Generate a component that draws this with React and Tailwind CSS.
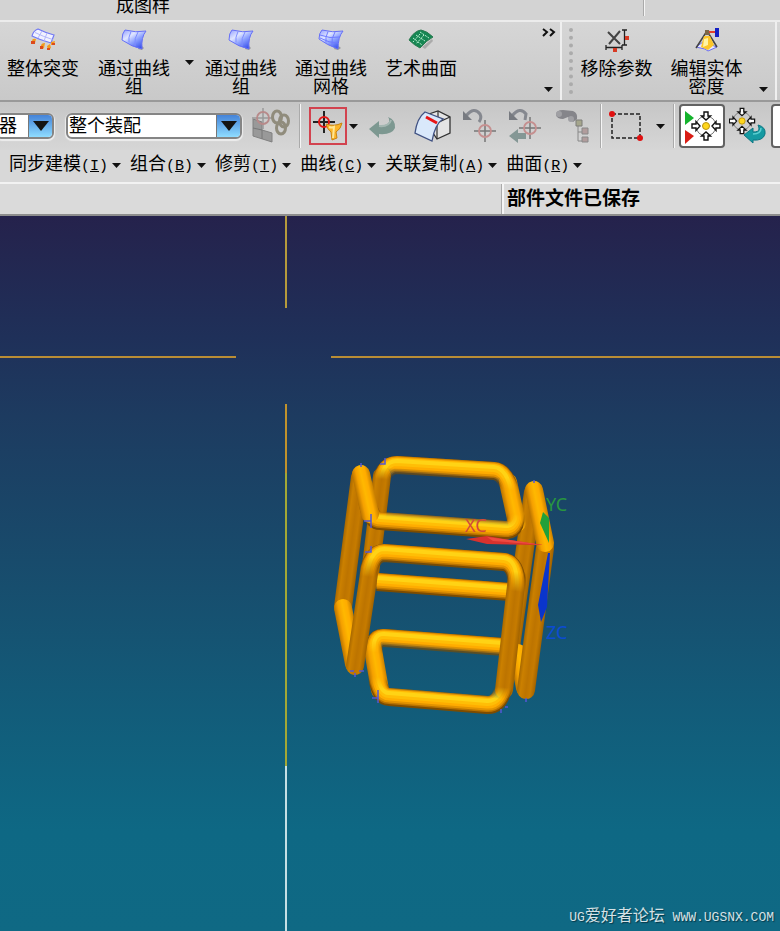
import React from 'react';

const Caret = ({ className = '' }) => (
  <svg viewBox="0 0 9 5" className={`w-[9px] h-[5px] shrink-0 ${className}`} aria-hidden="true">
    <path d="M0 0h9L4.5 5z" fill="#111" />
  </svg>
);

// --- TOOLBAR ICONS ---

const MorphIcon = () => (
  <svg viewBox="0 0 26 24" className="w-[26px] h-6">
    <path d="M8 1q8 4 16 6l-3 8Q10 12 2 8 3 3 8 1z" fill="#f1f2ff" stroke="#7078f4" strokeWidth="1.2" />
    <path d="M5 4.500q8 4 17.500 7M12 3l-4 7M17 5l-3 8" fill="none" stroke="#b3b7fb" strokeWidth="1" />
    <path d="M2 13q0-3 4-2l-1 4q-3 1-3-2zM11 18q0-3 4-3l-1 5q-2 2-3-2zM17 18l3-2 1 4-3 2zM21 14l4-1-1 4-3 0z" fill="#f29a1c" />
    <path d="M1 13h4v3H1zM10 18h3v3h-3zM17 20h3v2h-3zM22 15h3v2h-3z" fill="#dc4a1c" />
  </svg>
);

const CurvesIcon = () => (
  <svg viewBox="0 0 26 24" className="w-[26px] h-6">
    <defs>
      <linearGradient id="curves" x1="0" y1="0" x2="0.8" y2="1">
        <stop offset="0" stopColor="#8f9cff" />
        <stop offset="0.35" stopColor="#e0e6ff" />
        <stop offset="0.6" stopColor="#8fa3ff" />
        <stop offset="1" stopColor="#2f49ea" />
      </linearGradient>
    </defs>
    <path d="M19 16l4 4-2 2-4-1z" fill="#999" />
    <path d="M4 2q11 3 21 1-5 6-4 18Q11 19 1 12 1 5 4 2z" fill="url(#curves)" stroke="#6670f6" strokeWidth="1" />
    <path d="M10 3.500q-3 6-2 11M17 4q-4 6-3 14" fill="none" stroke="#7c8cff" strokeWidth="1" />
  </svg>
);

const MeshIcon = () => (
  <svg viewBox="0 0 26 24" className="w-[26px] h-6">
    <path d="M18 16l5 4-3 2-4-1z" fill="#999" />
    <path d="M4 2q11 3 21 1-5 6-5 18Q9 17 1 11 1 5 4 2z" fill="url(#curves)" stroke="#6670f6" strokeWidth="1" />
    <path d="M10 3.500q-3 6-2 11M17 4q-4 6-3 14M2 7q10 4 20 2M2 10q9 5 18 5" fill="none" stroke="#6f7cff" strokeWidth="1" />
  </svg>
);

const ArtSurfaceIcon = () => (
  <svg viewBox="0 0 26 24" className="w-[26px] h-6">
    <path d="M14 19l10-8 1 2-8 8z" fill="#aaa" />
    <path d="M1 12Q6 3 13 2q6 1 12 7-6 3-13 11Q6 17 1 12z" fill="#168653" stroke="#2b7a4f" strokeWidth="1" />
    <path d="M5 10l9 7M8 7l9 6M12 4l9 6M12 6l-7 8M16 7l-8 9" fill="none" stroke="#b9efcf" strokeWidth="1" strokeDasharray="2 1" />
  </svg>
);

const RemoveParamsIcon = () => (
  <svg viewBox="0 0 26 24" className="w-[26px] h-6">
    <path d="M4 4l12 12M16 3L5 16" stroke="#444" strokeWidth="2" />
    <path d="M18 2h5M18 17h5M20.500 2v15M2 17v5M18 17v5M2 19.500h16" stroke="#222" strokeWidth="1.300" fill="none" />
    <path d="M21 8h4v4h-4zM9 20h4v4H9z" fill="#d83a24" />
  </svg>
);

const DensityIcon = () => (
  <svg viewBox="0 0 26 24" className="w-[26px] h-6">
    <path d="M2 19l7-5 14 5-9 4-3-2z" fill="#e9eaff" stroke="#6a6cf0" strokeWidth="1" />
    <path d="M13 3L2 20M13 3l10 16" stroke="#444" strokeWidth="1.500" />
    <path d="M10 8h6l4 9-6 5-7-3z" fill="#fcc62a" />
    <path d="M10 11l4-1v7l-5 2z" fill="#fff4a5" />
    <path d="M11 2h4l1 5h-5z" fill="#7c6746" />
    <path d="M15 3h7v2h-7z" fill="#e3402c" />
    <path d="M21 0h4v9h-4z" fill="#1420c4" />
  </svg>
);

const Crosshair = ({ cx, cy, stroke = '#777', ring = '#c58f8f' }) => (
  <g fill="none">
    <path d={`M${cx - 11} ${cy}h22M${cx} ${cy - 11}v22`} stroke={stroke} strokeWidth="1.500" />
    <circle cx={cx} cy={cy} r="6" stroke={ring} strokeWidth="1.800" />
  </g>
);

const AssemblyLinkIcon = () => (
  <svg viewBox="0 0 38 36" className="w-[38px] h-9">
    <path d="M1 11l9 3v8l10 3v9L1 28z" fill="#999" stroke="#808080" />
    <path d="M1 20l9 2v9" fill="none" stroke="#777" />
    <Crosshair cx={11} cy={10} stroke="#999" ring="#b78a8a" />
    <g fill="none" strokeWidth="3" stroke="#908c7c">
      <ellipse cx="25" cy="9" rx="4.500" ry="6" />
      <ellipse cx="32" cy="13" rx="4.500" ry="6" />
      <ellipse cx="29" cy="20" rx="4.500" ry="6" />
    </g>
  </svg>
);

const FilterIcon = () => (
  <svg viewBox="0 0 34 34" className="w-[34px] h-[34px]">
    <path d="M2 13h22M13 2v22" stroke="#222" strokeWidth="2" />
    <circle cx="13" cy="13" r="5" fill="none" stroke="#e31414" strokeWidth="2" />
    <path d="M15 15q8 3 16-1-1 6-6 9l1 6-5 2-1-8q-4-3-5-8z" fill="#fbb52a" stroke="#c98410" strokeWidth="1" />
    <path d="M18 18q3 1 5 0l-1 11" fill="none" stroke="#ffe694" strokeWidth="2" />
  </svg>
);

const ReturnIcon = () => (
  <svg viewBox="0 0 28 28" className="w-7 h-7">
    <path d="M1 17l10-8v4q8 1 10-3 1-3-1-5 8 3 7 11-3 7-16 6v4z" fill="#7d9891" />
    <path d="M11 14q10 1 12-6" fill="none" stroke="#a4b7b2" strokeWidth="2" />
  </svg>
);

const SketchBoxIcon = () => (
  <svg viewBox="0 0 38 34" className="w-[38px] h-[34px]">
    <path d="M12 6l12-4 12 6v16l-13 6-4-6z" fill="#e4e4e4" stroke="#333" strokeWidth="1.300" />
    <path d="M36 8l-13 6v16M24 2v8" fill="none" stroke="#333" strokeWidth="1.200" />
    <path d="M11 3l18 7q-8 5-11 22L1 24Q3 9 11 3z" fill="#d9e8fb" stroke="#415283" strokeWidth="1.300" />
    <path d="M12 8l11 6" stroke="#e81414" strokeWidth="3" />
  </svg>
);

const UndoPointIcon = () => (
  <svg viewBox="0 0 36 36" className="w-9 h-9">
    <path d="M4 8Q12-2 18 6q2 4-1 8" fill="none" stroke="#85888f" strokeWidth="3" />
    <path d="M1 3v9h9z" fill="#777a80" />
    <Crosshair cx={23} cy={23} />
  </svg>
);

const BackPointIcon = () => (
  <svg viewBox="0 0 36 36" className="w-9 h-9">
    <path d="M4 8Q12-2 18 6l-1 6" fill="none" stroke="#85888f" strokeWidth="3" />
    <path d="M1 3v9h9z" fill="#777a80" />
    <path d="M1 28l9-7v4h8v6h-8v4z" fill="#849795" />
    <Crosshair cx={22} cy={20} />
  </svg>
);

const FindTreeIcon = () => (
  <svg viewBox="0 0 38 36" className="w-[38px] h-9">
    <path d="M2 7q0-5 7-5l10 1q5 2 4 8l-4 3-5-5-5 2q-6 0-7-4z" fill="#85858a" />
    <circle cx="5" cy="6" r="3" fill="#a0a0a4" />
    <circle cx="17" cy="11" r="3" fill="#a0a0a4" />
    <path d="M24 18v15h4M24 24h4" fill="none" stroke="#888" />
    <path d="M22 12h6v6h-6z" fill="#a5a68c" stroke="#7d7d78" />
    <path d="M28 20h6v6h-6zM28 29h6v5h-6z" fill="#b19c9c" stroke="#888" />
  </svg>
);

const RectSelectIcon = () => (
  <svg viewBox="0 0 36 32" className="w-9 h-8">
    <rect x="4" y="4" width="28" height="24" fill="none" stroke="#222" strokeWidth="1.500" strokeDasharray="4 2" />
    <circle cx="4" cy="4" r="3" fill="#e01010" />
    <circle cx="32" cy="28" r="3" fill="#e01010" />
  </svg>
);

const SnapMark = () => (
  <g>
    <circle r="10" fill="none" stroke="#777" strokeWidth="1" />
    <g fill="#fff" stroke="#111" strokeWidth="1.400">
      <path d="M-2-14h4v4h2.500L0-6l-4.500-4H-2z" />
      <path d="M-2 14h4v-4h2.500L0 6l-4.500 4H-2z" />
      <path d="M-14-2v4h4v2.500L-6 0l-4-4.500V-2z" />
      <path d="M14-2v4h-4v2.500L6 0l4-4.500V-2z" />
    </g>
    <circle r="3.500" fill="#ffd61c" stroke="#bb930e" strokeWidth="1" />
  </g>
);

const SnapEnableIcon = () => (
  <svg viewBox="0 0 42 40" className="w-[42px] h-10">
    <path d="M4 5l9 7-9 7z" fill="#15b32d" />
    <path d="M4 24l9 6-9 8z" fill="#d91c14" />
    <g transform="translate(25 20)"><SnapMark /></g>
  </svg>
);

const SnapResetIcon = () => (
  <svg viewBox="0 0 38 38" className="w-[38px] h-[38px]">
    <g transform="translate(13 14) scale(.9)"><SnapMark /></g>
    <path d="M15 28l9-7v4q6 0 6-3 0-2-1-4 8 2 7 9-2 7-12 6v3z" fill="#159aa2" stroke="#0d7783" strokeWidth="1" />
    <path d="M24 27q8 0 8-6" fill="none" stroke="#5cd0d2" strokeWidth="1.500" />
  </svg>
);

// --- TOOLBAR PIECES ---

const ToolButton = ({ icon, label }) => (
  <button type="button" className="flex w-[72px] shrink-0 flex-col items-center gap-2 text-center text-lg leading-[18px]">
    {icon}
    <span className="w-[72px] break-all">{label}</span>
  </button>
);

const IconButton = ({ label, className = '', children }) => (
  <button type="button" aria-label={label} className={`flex shrink-0 items-center justify-center ${className}`}>
    {children}
  </button>
);

const Divider = () => <div className="h-11 w-[2px] shrink-0 border-l border-[#aaa] bg-[#f5f5f5]" />;

const Combo = ({ label, value, className }) => (
  <div className={`flex h-[26px] shrink-0 overflow-hidden rounded-md border-2 border-[#858585] bg-white shadow-[0_1px_1px_1px_#eee] ${className}`}>
    <select aria-label={label} className="min-w-0 flex-1 appearance-none pl-px text-lg leading-5 outline-none">
      <option>{value}</option>
    </select>
    <div className="pointer-events-none flex w-6 items-center justify-center border-l border-[#777] bg-linear-to-b from-[#4583d8] to-[#8fdcff]">
      <svg viewBox="0 0 16 10" className="h-[10px] w-4"><path d="M0 0h16L8 10z" fill="#141414" /></svg>
    </div>
  </div>
);

const menus = [
  { name: '同步建模', hotkey: 'I' },
  { name: '组合', hotkey: 'B' },
  { name: '修剪', hotkey: 'T' },
  { name: '曲线', hotkey: 'C' },
  { name: '关联复制', hotkey: 'A' },
  { name: '曲面', hotkey: 'R' },
];

// --- 3D MODEL ---

// Drawn back to front. Straight pipes get a cross gradient, bent ones are
// stacked strokes whose ends fade out along the `fade` vector.
const pipes = [
  { shade: 'dark', line: [382, 476, 369, 582] },
  { bend: 'M377 582L510 592' },
  { shade: 'dark', line: [533, 492, 511, 647] },
  { shade: 'side', line: [518, 653, 525, 688] },
  { shade: 'side', line: [372, 644, 380, 690] },
  { bend: 'M375 664Q370 637 384 638L503 647', fade: [440, 646, 439, 658] },
  { shade: 'side', line: [508, 482, 517, 523] },
  { bend: 'M380 492Q381 465 397 465L494 471Q507 472 512 498', fade: [440, 472, 439, 484] },
  { shade: 'dark', line: [360, 477, 343, 607] },
  { shade: 'side', line: [343, 608, 354, 664] },
  { bend: 'M366 496Q370 521 380 521L505 530Q519 531 515 506', fade: [440, 521, 441, 508] },
  { shade: 'side', line: [361, 474, 370, 514] },
  { shade: 'dark', line: [370, 567, 355, 666] },
  { shade: 'dark', line: [517, 577, 504, 690] },
  { bend: 'M376 668Q378 697 389 697L487 705Q501 706 505 680', fade: [440, 694, 441, 682] },
  { bend: 'M366 586Q369 553 384 553L504 562Q520 564 516 600', fade: [440, 564, 438, 584] },
  { shade: 'dark', line: [545, 548, 526, 690] },
  { shade: 'side', line: [534, 490, 545, 543] },
];

const shades = {
  side: [[0, '#b87200'], [0.25, '#f5a000'], [0.5, '#ffb800'], [0.75, '#ffac00'], [1, '#c98000']],
  dark: [[0, '#a86800'], [0.2, '#cb8000'], [0.5, '#bd7400'], [0.75, '#c67b00'], [1, '#a06200']],
};

const layers = [
  { width: 18, dy: 0, color: '#7d4c00' },
  { width: 16, dy: -1, color: '#b87200' },
  { width: 14, dy: -1.5, color: '#e39300' },
  { width: 11, dy: -2, color: '#ffac00' },
  { width: 8, dy: -3, color: '#ffbe06' },
  { width: 4, dy: -4, color: '#ffd315' },
];

const RADIUS = 9;

const StraightPipe = ({ id, shade, line }) => {
  const [x1, y1, x2, y2] = line;
  const len = Math.hypot(x2 - x1, y2 - y1);
  const nx = (-(y2 - y1) / len) * RADIUS;
  const ny = ((x2 - x1) / len) * RADIUS;
  return (
    <g>
      <linearGradient id={id} gradientUnits="userSpaceOnUse" x1={x1 + nx} y1={y1 + ny} x2={x1 - nx} y2={y1 - ny}>
        {shades[shade].map(([offset, color]) => (
          <stop key={offset} offset={offset} stopColor={color} />
        ))}
      </linearGradient>
      <path d={`M${x1} ${y1}L${x2} ${y2}`} stroke={`url(#${id})`} strokeWidth={RADIUS * 2} strokeLinecap="round" />
    </g>
  );
};

const BentPipe = ({ id, bend, fade }) => (
  <g mask={fade ? `url(#${id}-mask)` : undefined}>
    {fade && (
      <defs>
        <linearGradient id={`${id}-fade`} gradientUnits="userSpaceOnUse" x1={fade[0]} y1={fade[1]} x2={fade[2]} y2={fade[3]}>
          <stop offset="0" stopColor="#fff" />
          <stop offset="1" stopColor="#000" />
        </linearGradient>
        <mask id={`${id}-mask`} maskUnits="userSpaceOnUse" x="320" y="440" width="250" height="290">
          <rect x="320" y="440" width="250" height="290" fill={`url(#${id}-fade)`} />
        </mask>
      </defs>
    )}
    {layers.map(({ width, dy, color }) => (
      <path key={width} d={bend} transform={`translate(0 ${dy})`} fill="none" stroke={color} strokeWidth={width} />
    ))}
  </g>
);

const Model = () => (
  <svg viewBox="0 216 780 715" preserveAspectRatio="xMidYMid slice" className="absolute inset-0 h-full w-full" role="img" aria-label="3D">
    <g strokeWidth="2">
      <path d="M0 357H236M331 357H780" stroke="#b98d35" />
      <path d="M286 216V308" stroke="#b59a3c" />
      <path d="M286 404V473" stroke="#c0922c" />
      <path d="M286 473V766" stroke="#a3a835" />
      <path d="M286 766V931" stroke="#c5dfe4" />
    </g>
    {pipes.map((pipe, i) =>
      pipe.bend ? <BentPipe key={i} id={`pipe${i}`} {...pipe} /> : <StraightPipe key={i} id={`pipe${i}`} {...pipe} />
    )}
    <path
      d="M361 463v4M385 458v6h-5M371 514v14M364 521h7M371 546v6h-6M378 690v13M372 698h6M350 671h4M359 671h5M355 673v4M526 698v4M501 709v4M505 707h3M534 480v3"
      fill="none"
      stroke="#5457d6"
      strokeWidth="1.500"
    />
    <path d="M466 539l21-3 23 4 33 5-56-1z" fill="#d8322e" />
    <path d="M487 537l23 3 33 5-50-4z" fill="#ed4a42" />
    <path d="M543 512l6 6v25l-9-20z" fill="#22a03a" />
    <path d="M548 553l2 0-3 54-6 15-3-17z" fill="#0a35cc" />
    <g fontFamily="'Noto Sans', sans-serif" fontSize="18">
      <text x="465" y="532" fill="#d24a3c">XC</text>
      <text x="546" y="511" fill="#28963f">YC</text>
      <text x="546" y="639" fill="#0c4bd2">ZC</text>
    </g>
  </svg>
);

export default function App() {
  return (
    <div className="flex min-h-screen w-full flex-col overflow-hidden bg-[#d4d4d4] font-['Liberation_Sans','Noto_Sans_CJK_SC',sans-serif] text-black">
      {/* bottom edge of the upper toolbar */}
      <div className="flex h-5 items-end overflow-hidden bg-[#d3d3d3] pl-[116px]">
        <button type="button" className="mb-[5px] w-[527px] shrink-0 text-left text-lg leading-[18px]">成图样</button>
        <div className="mb-1 h-5 w-[2px] border-l border-[#aaa] bg-[#f5f5f5]" />
      </div>

      {/* surface toolbar */}
      <div className="flex h-[82px] border-t-2 border-b-2 border-t-[#ececec] border-b-[#999] bg-linear-to-b from-[#d6d6d6] to-[#c9c9c9]">
        <div className="flex w-[72%] border-r-2 border-[#efefef] pt-[6px] pr-1 pl-[7px]">
          <ToolButton icon={<MorphIcon />} label="整体突变" />
          <div className="ml-[19px] flex">
            <ToolButton icon={<CurvesIcon />} label="通过曲线组" />
            <IconButton label="▾" className="mt-7 ml-[15px] h-5 w-[9px]"><Caret className="-mt-2" /></IconButton>
          </div>
          <div className="ml-[11px] flex gap-[18px]">
            <ToolButton icon={<CurvesIcon />} label="通过曲线组" />
            <ToolButton icon={<MeshIcon />} label="通过曲线网格" />
            <ToolButton icon={<ArtSurfaceIcon />} label="艺术曲面" />
          </div>
          <div className="ml-auto flex flex-col items-center justify-between pb-2">
            <svg viewBox="0 0 14 10" className="h-[10px] w-[14px]">
              <path d="M1 1l4 3-4 4M8 1l4 3-4 4" fill="none" stroke="#111" strokeWidth="2" />
            </svg>
            <Caret />
          </div>
        </div>
        <div className="flex flex-1 pt-[6px] pl-[7px]">
          <div className="h-[66px] w-1 border-l-4 border-dotted border-[#ababab]" />
          <div className="ml-2 flex gap-[18px]">
            <ToolButton icon={<RemoveParamsIcon />} label="移除参数" />
            <ToolButton icon={<DensityIcon />} label="编辑实体密度" />
          </div>
          <Caret className="mt-auto mb-2 ml-4" />
        </div>
        <div className="w-[5px] border-l-2 border-[#efefef]" />
      </div>

      {/* selection bar */}
      <div className="flex h-12 items-center bg-linear-to-b from-[#c6c6c6] to-[#d6d6d6]">
        <Combo label="选择过滤器" value="器" className="-ml-1 w-[58px]" />
        <Combo label="选择范围" value="整个装配" className="ml-3 w-[176px]" />
        <IconButton label="装配约束" className="ml-[10px]"><AssemblyLinkIcon /></IconButton>
        <div className="ml-[9px] flex items-center gap-2">
          <Divider />
          <IconButton label="过滤器" className="border-2 border-[#d2434f]"><FilterIcon /></IconButton>
        </div>
        <IconButton label="▾" className="ml-[2px]"><Caret /></IconButton>
        <IconButton label="返回" className="ml-[10px]"><ReturnIcon /></IconButton>
        <div className="ml-[18px] flex items-center gap-[10px]">
          <IconButton label="草图"><SketchBoxIcon /></IconButton>
          <IconButton label="撤消点"><UndoPointIcon /></IconButton>
          <IconButton label="返回点"><BackPointIcon /></IconButton>
          <IconButton label="查找"><FindTreeIcon /></IconButton>
        </div>
        <div className="ml-2 flex items-center gap-[6px]">
          <Divider />
          <IconButton label="矩形选择"><RectSelectIcon /></IconButton>
        </div>
        <IconButton label="▾" className="ml-[12px]"><Caret /></IconButton>
        <div className="ml-2 flex items-center gap-1">
          <Divider />
          <IconButton label="启用捕捉点" className="h-11 w-[46px] rounded border-2 border-[#626262] bg-white"><SnapEnableIcon /></IconButton>
          <IconButton label="重置捕捉点"><SnapResetIcon /></IconButton>
          <IconButton label="端点" className="h-11 w-[46px] rounded border-2 border-[#626262] bg-white">
            <svg viewBox="0 0 30 30" className="h-7 w-7"><path d="M3 27L27 3" stroke="#333" strokeWidth="2" /></svg>
          </IconButton>
        </div>
      </div>

      {/* menu row */}
      <nav className="flex h-8 items-start gap-[9px] bg-[#d8d8d8] pt-[2px] pl-[9px]">
        {menus.map((menu) => (
          <button key={menu.name} type="button" className="flex shrink-0 items-center gap-1 text-lg leading-6">
            <span>
              {menu.name}
              <span className="font-['Liberation_Mono',monospace] text-[15px]">(<u>{menu.hotkey}</u>)</span>
            </span>
            <Caret />
          </button>
        ))}
      </nav>

      {/* status line */}
      <div className="flex h-[34px] border-t-2 border-b-2 border-t-[#f2f2f2] border-b-[#8d8d8d] bg-[#dadada]">
        <div className="w-[502px] border-r border-[#aaa]" />
        <div className="flex-1 border-l-2 border-[#f5f5f5] pl-[3px] text-[19px] leading-[30px] font-bold">部件文件已保存</div>
      </div>

      {/* graphics window */}
      <main className="relative flex-1 bg-[linear-gradient(#25224c,#1f3059_17%,#1d3b60_28%,#174e6e_52%,#115f7c_73%,#0e6884_86%,#0f6984)]">
        <Model />
        <p className="absolute right-[6px] bottom-[3px] text-base leading-5 whitespace-nowrap text-[#d5e2e6] [text-shadow:1px_1px_1px_#083848]">
          <span className="font-['Liberation_Mono',monospace] text-[13px]">UG</span>
          爱好者论坛
          <span className="font-['Liberation_Mono',monospace] text-[13px]"> WWW.UGSNX.COM</span>
        </p>
      </main>
    </div>
  );
}
